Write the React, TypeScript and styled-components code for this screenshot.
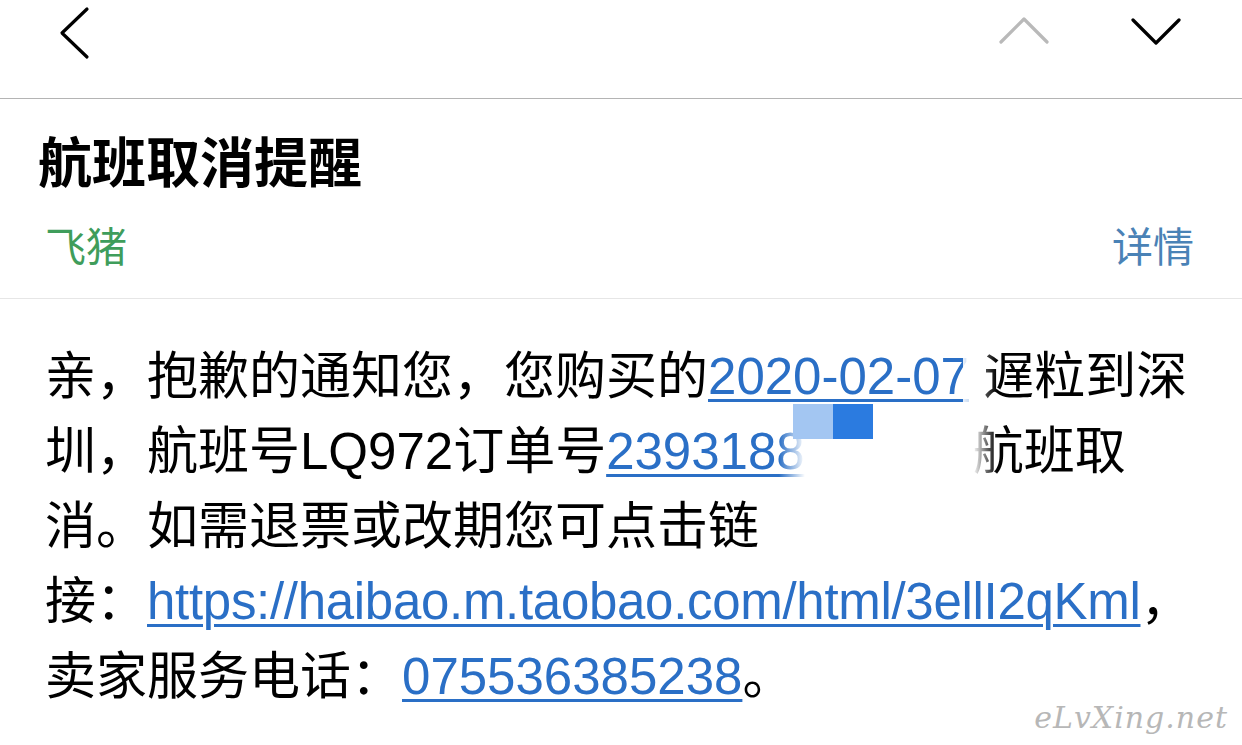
import React from "react";
import styled, { createGlobalStyle } from "styled-components";

const GlobalStyle = createGlobalStyle`
  html, body { margin: 0; padding: 0; background: #ffffff; }
  body {
    font-family: "Liberation Sans", "Noto Sans CJK SC", sans-serif;
    color: #000;
    overflow: hidden;
  }
  * { box-sizing: border-box; }
`;

const Page = styled.div`
  position: relative;
  width: 1242px;
  height: 745px;
  background: #fff;
  overflow: hidden;
`;

const TopBar = styled.header`
  height: 99px;
  display: flex;
  align-items: flex-start;
  justify-content: space-between;
  padding: 6px 61px 0 59px;
  border-bottom: 1px solid #b4b4b4;
`;

const NavGroup = styled.div`
  display: flex;
  align-items: center;
  gap: 82px;
  padding-top: 11px;
`;

const IconSvg = styled.svg<{ $muted?: boolean }>`
  display: block;
  fill: none;
  stroke: ${(p) => (p.$muted ? "#b9b9b9" : "#000")};
  stroke-width: 3.2;
  stroke-linecap: round;
  stroke-linejoin: round;
`;

const MailHead = styled.section`
  padding: 33px 48px 0 38px;
  border-bottom: 1px solid #e6e6e6;
  height: 200px;
`;

const Title = styled.h1`
  margin: 0;
  font-size: 54px;
  line-height: 64px;
  font-weight: 700;
  font-family: "Liberation Sans", "Noto Sans CJK SC", sans-serif;
`;

const SenderRow = styled.div`
  display: flex;
  justify-content: space-between;
  align-items: center;
  margin-top: 27px;
  padding-left: 7px;
`;

const SenderName = styled.span<{ $tone: "green" | "blue" }>`
  font-size: 41px;
  line-height: 50px;
  color: ${(p) => (p.$tone === "green" ? "#3f9d5b" : "#4a82b6")};
`;

const Body = styled.article`
  padding: 40px 45px 0 45px;
`;

const Paragraph = styled.p`
  margin: 0;
  font-size: 51px;
  line-height: 75px;
  color: #000;
  word-break: normal;
`;

const Link = styled.a<{ $tight?: boolean }>`
  color: #2a6fc6;
  text-decoration: underline;
  text-decoration-thickness: 3px;
  text-underline-offset: 5px;
  letter-spacing: ${(p) => (p.$tight ? "-0.3px" : "0")};
`;

const NoWrap = styled.span`
  white-space: nowrap;
`;

const Redacted = styled.span`
  position: relative;
  display: inline-block;
  width: 168px;
  height: 1em;
  vertical-align: baseline;
`;

const RedactFade = styled.span`
  position: absolute;
  left: -26px;
  right: -24px;
  top: -8px;
  height: 75px;
  background: linear-gradient(
    to right,
    rgba(255, 255, 255, 0) 0,
    #fff 26px,
    #fff calc(100% - 24px),
    rgba(255, 255, 255, 0) 100%
  );
`;

const Mosaic = styled.span`
  position: absolute;
  left: -12px;
  top: -14px;
  display: flex;
`;

const MosaicTile = styled.span<{ $shade: string }>`
  width: 40px;
  height: 35px;
  background: ${(p) => p.$shade};
`;

const SoftEdge = styled.span`
  position: relative;
  display: inline-block;
  width: 0.28em;
`;

const SoftEdgeFade = styled.span`
  position: absolute;
  left: -6px;
  width: 34px;
  top: -60px;
  height: 75px;
  background: linear-gradient(
    to right,
    rgba(255, 255, 255, 0.9),
    rgba(255, 255, 255, 0)
  );
`;

const Watermark = styled.div`
  position: absolute;
  right: 14px;
  bottom: 10px;
  font-family: "DejaVu Serif", serif;
  font-style: italic;
  font-size: 30px;
  letter-spacing: 1px;
  color: #b7b7b7;
`;

export default function App() {
  return (
    <Page>
      <GlobalStyle />
      <TopBar>
        <IconSvg width="32" height="54" viewBox="0 0 32 54">
          <polyline points="28,3 3,27 28,51" />
        </IconSvg>
        <NavGroup>
          <IconSvg $muted width="50" height="28" viewBox="0 0 50 28">
            <polyline points="2,25 25,2 48,25" />
          </IconSvg>
          <IconSvg width="50" height="28" viewBox="0 0 50 28">
            <polyline points="2,3 25,26 48,3" />
          </IconSvg>
        </NavGroup>
      </TopBar>

      <MailHead>
        <Title>航班取消提醒</Title>
        <SenderRow>
          <SenderName $tone="green">飞猪</SenderName>
          <SenderName $tone="blue">详情</SenderName>
        </SenderRow>
      </MailHead>

      <Body>
        <Paragraph>
          亲，抱歉的通知您，您购买的<Link href="#">2020-02-07</Link>
          <SoftEdge>
            <SoftEdgeFade />
          </SoftEdge>
          遅粒到深圳，航班号LQ972订单号<Link href="#">2393188</Link>
          <Redacted>
            <RedactFade />
            <Mosaic>
              <MosaicTile $shade="#a3c6f2" />
              <MosaicTile $shade="#2b7be0" />
            </Mosaic>
          </Redacted>
          航班取消。如需退票或改期您可点击链
          <NoWrap>
            接：<Link href="#" $tight>https://haibao.m.taobao.com/html/3ellI2qKml</Link>，
          </NoWrap>
          卖家服务电话：<Link href="#">075536385238</Link>。
        </Paragraph>
      </Body>

      <Watermark>eLvXing.net</Watermark>
    </Page>
  );
}
